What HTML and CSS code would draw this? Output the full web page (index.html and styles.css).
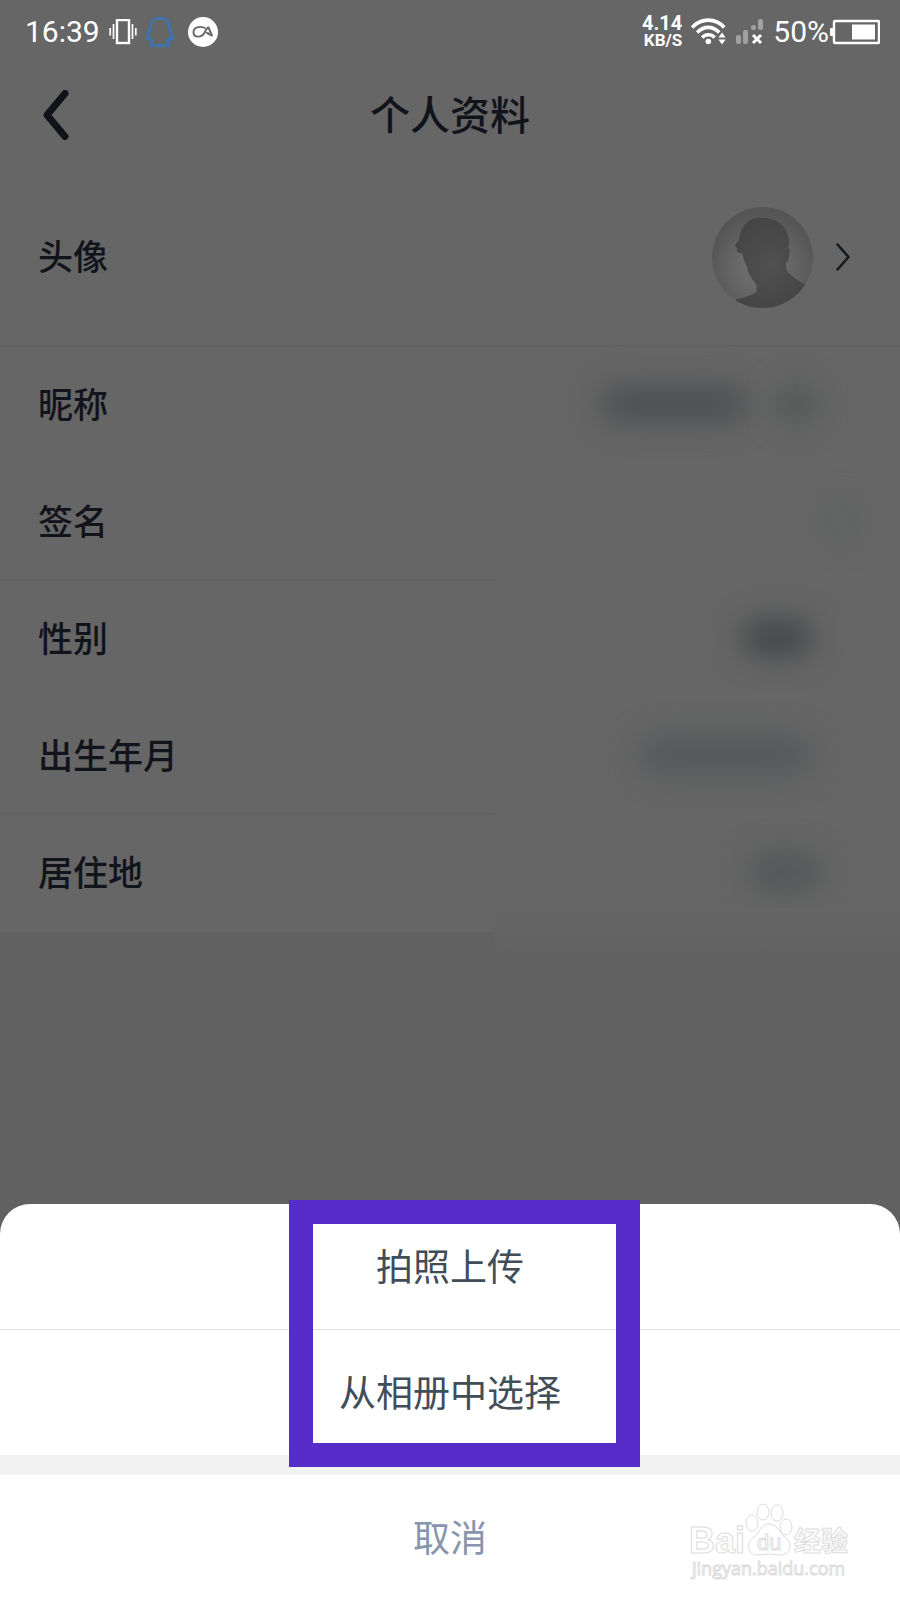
FILE: index.html
```
<!DOCTYPE html>
<html lang="zh-CN">
<head>
  <meta charset="UTF-8">
  <meta name="viewport" content="width=device-width, initial-scale=1.0">
  <title>个人资料</title>
  <link rel="stylesheet" href="styles.css">
</head>
<body>
  <div class="screen">
    <div class="status-bar">
      <div class="status-left">
        <span class="clock">16:39</span>
        <svg width="28" height="26" viewBox="0 0 28 26" fill="none" stroke="#fff">
          <rect x="8" y="1" width="12" height="23" stroke-width="2.4"/>
          <path d="M4.5 5v15M23.5 5v15M1.2 9v7.5M26.8 9v7.5" stroke-width="1.7"/>
        </svg>
        <svg class="qq-icon" width="28" height="32" viewBox="0 0 28 32" fill="none" stroke="#3a74b4" stroke-width="2.6" stroke-linejoin="round">
          <path d="M14 2C8 2 4.500 6 4.500 11.500 4.500 14 1.600 17 1.600 21c0 2.500 1.200 3.200 3.200 1.200.4 1.500 1 2.500 2 3.500-1.400.7-2 2-1.600 4h7l1.800-1 1.800 1h7c.4-2-.2-3.300-1.600-4 1-1 1.600-2 2-3.500 2 2 3.200 1.300 3.200-1.200 0-4-2.900-7-2.900-9.500C23.500 6 20 2 14 2z"/>
        </svg>
        <svg width="30" height="30" viewBox="0 0 30 30" fill="none">
          <circle cx="15" cy="15" r="15" fill="#fff"/>
          <path d="M17.500 11.500C14 9 5.500 9 5.500 15.200c0 5.800 8 5.800 11 .5 1.500-2.700 2.500-5.200 4-5.200l3.700 8.500" stroke="#666" stroke-width="1.900"/>
          <path d="M16.500 14.500l4.500 1 3.700 4.500-5.200-2.500z" fill="#666"/>
        </svg>
      </div>
      <div class="status-right">
        <div class="net-speed">
          <span class="speed-value">4.14</span>
          <span class="speed-unit">KB/S</span>
        </div>
        <svg width="36" height="28" viewBox="0 0 36 28" fill="none" stroke="#fff" stroke-width="3.600">
          <path d="M1.200 9.500C10-.3 24.500-.3 33.300 9.500M6.200 14.500c6.500-6.800 15.500-6.800 22 0M11.200 19.500c3.500-3.700 9-3.700 12.500 0"/>
          <circle cx="17.300" cy="23.500" r="2.800" fill="#fff" stroke="none"/>
          <path d="M27.500 19.500l3.500-5 3.500 5zM27.500 21.500l3.500 5 3.500-5z" fill="#fff" stroke="none"/>
        </svg>
        <svg width="28" height="28" viewBox="0 0 28 28">
          <g fill="#a0a0a0">
            <rect x="0" y="17" width="5" height="9" rx="2"/>
            <rect x="7" y="12" width="5" height="14" rx="2"/>
            <rect x="15" y="7" width="5" height="5" rx="2"/>
            <rect x="22" y="1" width="5" height="11" rx="2"/>
          </g>
          <path d="M17 17l8 8M25 17l-8 8" stroke="#fff" stroke-width="3"/>
        </svg>
        <span class="battery-text">50%</span>
        <svg width="50" height="26" viewBox="0 0 50 26">
          <rect x="4" y="2" width="45" height="22" rx="1" fill="none" stroke="#fff" stroke-width="2.400"/>
          <rect x="0" y="9" width="4" height="8" rx="1" fill="#fff"/>
          <rect x="22" y="5.500" width="23" height="15" fill="#fff"/>
        </svg>
      </div>
    </div>

    <header class="nav-bar">
      <button type="button" class="back-btn" aria-label="返回">
        <svg width="26" height="50" viewBox="0 0 26 50" fill="none" stroke="#11131a" stroke-width="7" stroke-linecap="round" stroke-linejoin="round">
          <path d="M22 3.500L4 25l18 21.500"/>
        </svg>
      </button>
      <h1>个人资料</h1>
    </header>

    <main class="profile">
      <button type="button" class="row avatar-row">
        <span class="label">头像</span>
        <span class="avatar-value">
          <svg width="101" height="101" viewBox="0 0 100 100">
            <defs>
              <radialGradient id="avatarBg" cx="0.5" cy="0.6" r="0.55">
                <stop offset="0" stop-color="#747474"/>
                <stop offset="0.55" stop-color="#656565"/>
                <stop offset="1" stop-color="#555"/>
              </radialGradient>
              <radialGradient id="avatarMan" cx="0.45" cy="0.5" r="0.6">
                <stop offset="0" stop-color="#505050"/>
                <stop offset="1" stop-color="#434343"/>
              </radialGradient>
              <clipPath id="avatarClip"><circle cx="50" cy="50" r="50"/></clipPath>
            </defs>
            <g clip-path="url(#avatarClip)">
              <rect width="100" height="100" fill="url(#avatarBg)"/>
              <path d="M44 11C35 12 29 20 27 30c0 3-1 4-4 7 0 2 1 3 2 4l0 4 5 1c1 6 3 10 5 14 1 7 5 12 9 17v7c-5 4-13 6-21 8l10 12h50l16-24c-8-4-17-8-25-17l-1-7c4-3 3-8 4-14-1-1-2-2-1-4 1-11-3-20-14-25-5-2-12-3-18-2z" fill="url(#avatarMan)"/>
            </g>
          </svg>
          <svg width="14" height="28" viewBox="0 0 14 28" fill="none" stroke="#141a21" stroke-width="2.600" stroke-linecap="round" stroke-linejoin="round">
            <path d="M1.500 1.500L12.500 14l-11 12.500"/>
          </svg>
        </span>
      </button>
      <button type="button" class="row">
        <span class="label">昵称</span>
        <span class="masked"><i class="blot blot-name"></i><i class="blot blot-suffix"></i></span>
      </button>
      <button type="button" class="row line">
        <span class="label">签名</span>
        <span class="masked"><i class="blot blot-sign"></i></span>
      </button>
      <button type="button" class="row">
        <span class="label">性别</span>
        <span class="masked"><i class="blot blot-gender"></i></span>
      </button>
      <button type="button" class="row line">
        <span class="label">出生年月</span>
        <span class="masked"><i class="blot blot-birth"></i></span>
      </button>
      <button type="button" class="row">
        <span class="label">居住地</span>
        <span class="masked"><i class="blot blot-city"></i></span>
      </button>
    </main>

    <section class="sheet">
      <div class="sheet-options">
        <button type="button" class="sheet-btn">拍照上传</button>
        <button type="button" class="sheet-btn">从相册中选择</button>
        <div class="highlight"></div>
      </div>
      <button type="button" class="sheet-btn cancel-btn">取消</button>
      <svg class="watermark" width="168" height="84" viewBox="0 0 168 84" fill="#fff" stroke="#dcdcdc">
        <text class="wm-bai" x="1" y="53">Bai</text>
        <ellipse cx="64" cy="23" rx="6" ry="8"/>
        <ellipse cx="75" cy="12" rx="6" ry="8"/>
        <ellipse cx="89" cy="13" rx="6" ry="8"/>
        <ellipse cx="98" cy="27" rx="6" ry="8"/>
        <path d="M81 24c-9 0-9 9-15 13-9 6-7 18 4 18 5 0 6-1 11-1s7 1 12 1c10-1 12-12 4-18-6-4-7-13-16-13z"/>
        <text class="wm-du" x="69" y="50">du</text>
        <text class="wm-exp" x="106" y="51">经验</text>
        <text class="wm-url" x="4" y="75">jingyan.baidu.com</text>
      </svg>
    </section>
  </div>
</body>
</html>
```
FILE: styles.css
```
/* General styles */
* {
  box-sizing: border-box;
}

body {
  margin: 0;
  background: #616161;
  color: #12141b;
  font-family: "Noto Sans CJK SC", sans-serif;
}

button {
  border: none;
  padding: 0;
  background: none;
  color: inherit;
  font-family: inherit;
  cursor: pointer;
}

svg {
  display: block;
  flex-shrink: 0;
}

.screen {
  display: flex;
  flex-direction: column;
  min-height: 100vh;
}

/* Status bar */
.status-bar {
  display: flex;
  justify-content: space-between;
  align-items: center;
  height: 63px;
  padding: 0 20px 0 25px;
  background: #666;
  color: #fff;
  font-family: Roboto, sans-serif;
  font-size: 30px;
}

.status-left,
.status-right {
  display: flex;
  align-items: center;
}

.status-left {
  gap: 9px;
}

.qq-icon {
  margin-right: 5px;
}

.status-right {
  gap: 9px;
}

.battery-text {
  margin-right: -8px;
}

.net-speed {
  display: flex;
  flex-direction: column;
  align-items: flex-end;
  font-weight: 700;
  line-height: 17px;
}

.speed-value {
  font-size: 20px;
}

.speed-unit {
  font-size: 17px;
}

/* Title bar */
.nav-bar {
  display: grid;
  grid-template-columns: 80px 1fr 80px;
  align-items: center;
  height: 103px;
  background: #666;
}

.back-btn {
  padding-left: 43px;
}

h1 {
  margin: 0;
  padding-bottom: 3px;
  text-align: center;
  font-size: 40px;
  font-weight: 500;
}

/* Profile rows */
.profile {
  position: relative;
  display: flex;
  flex-direction: column;
  background: #666;
}

/* soft lower edge beside the masked values */
.profile::after {
  content: "";
  position: absolute;
  left: 55%;
  right: 0;
  bottom: -24px;
  height: 48px;
  background: linear-gradient(#666, #616161);
}

.row {
  display: flex;
  justify-content: space-between;
  align-items: center;
  height: 117px;
  padding: 0 50px 0 38px;
  font-size: 35px;
  font-weight: 500;
  text-align: left;
}

.label {
  padding-bottom: 6px;
}

.avatar-row {
  height: 181px;
  padding-top: 3px;
  border-bottom: 2px solid #626262;
}

.line {
  background: linear-gradient(#616161, #616161) left bottom / 55% 2px no-repeat;
}

.avatar-value {
  display: flex;
  align-items: center;
  gap: 23px;
}

.masked {
  display: flex;
  align-items: center;
  gap: 30px;
  padding-bottom: 4px;
}

.blot {
  height: 36px;
  border-radius: 16px;
  background: #4c4e51;
  filter: blur(15px);
}

.blot-name {
  width: 145px;
}

.blot-suffix {
  width: 40px;
  margin-right: 34px;
  background: #515555;
}

.blot-sign {
  width: 30px;
  margin-right: -6px;
  background: #5e6361;
}

.blot-gender {
  width: 70px;
  margin-right: 38px;
  background: #434548;
}

.blot-birth {
  width: 170px;
  margin-right: 40px;
  background: #535658;
}

.blot-city {
  width: 70px;
  margin-right: 30px;
  background: #525556;
}

/* Bottom sheet */
.sheet {
  position: relative;
  margin-top: auto;
  border-radius: 30px 30px 0 0;
  background: #fff;
}

.sheet-options {
  position: relative;
  border-bottom: 20px solid #f2f2f2;
}

.sheet-btn {
  display: block;
  width: 100%;
  height: 125px;
  padding-bottom: 3px;
  color: #414d57;
  font-size: 37px;
}

.sheet-btn + .sheet-btn {
  height: 126px;
  border-top: 1px solid #e2e2e2;
}

.cancel-btn {
  color: #8796ad;
}

.highlight {
  position: absolute;
  top: -4px;
  bottom: -12px;
  left: 289px;
  width: 351px;
  border: 24px solid #562dc9;
  pointer-events: none;
}

/* Watermark */
.watermark {
  position: absolute;
  right: 44px;
  bottom: 16px;
  pointer-events: none;
}

.wm-bai {
  font: 700 36px "Liberation Sans", sans-serif;
}

.wm-du {
  font: 400 22px "Liberation Sans", sans-serif;
}

.wm-exp {
  font: 700 27px "Noto Sans CJK SC", sans-serif;
}

.wm-url {
  font: 400 18px "Open Sans", sans-serif;
}
```
